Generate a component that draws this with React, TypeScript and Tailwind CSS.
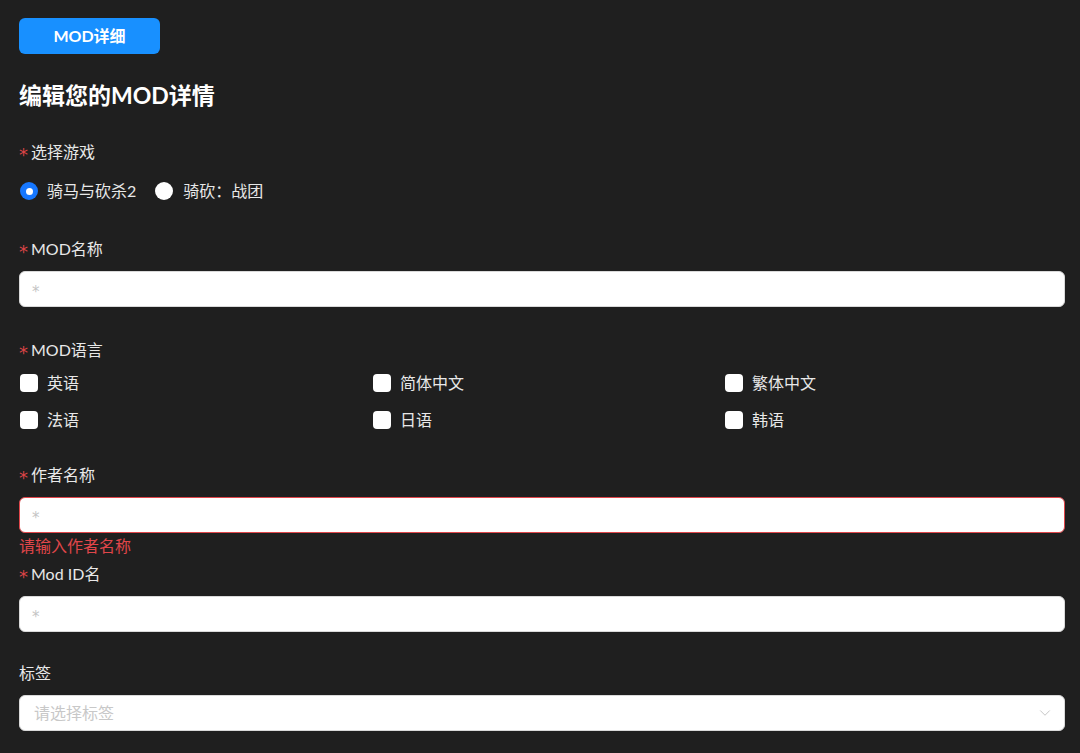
import { ChevronDown } from "lucide-react";

const font = { fontFamily: "Lato, 'Noto Sans CJK SC', sans-serif" };

function Label({ text, required = true }: { text: string; required?: boolean }) {
    return (
        <div className="flex items-center h-6 text-[16px] text-[#e8e8e8]">
            {required && (
                <span className="text-[#dc4446] mr-[3px] text-[18px] leading-none translate-y-[3px]" style={{ fontFamily: "'DejaVu Sans', sans-serif" }}>
                    *
                </span>
            )}
            <span>{text}</span>
        </div>
    );
}

function TextInput({ error = false }: { error?: boolean }) {
    return (
        <div
            className={`h-9 bg-white rounded-md flex items-center px-3 text-[#c4c4c4] text-[15px] border ${
                error ? "border-[#e0464a]" : "border-[#d9d9d9]"
            }`}
        >
            <span className="translate-y-[3px]" style={{ fontFamily: "'DejaVu Sans', sans-serif" }}>*</span>
        </div>
    );
}

function Check({ text }: { text: string }) {
    return (
        <div className="flex items-center h-6">
            <div className="w-[18px] h-[18px] bg-white rounded-[4px] ml-px mr-[9px]" />
            <span className="text-[16px] text-[#e8e8e8]">{text}</span>
        </div>
    );
}

export default function App() {
    const langs = ["英语", "简体中文", "繁体中文", "法语", "日语", "韩语"];

    return (
        <div className="w-[1080px] h-[753px] bg-[#1f1f1f] overflow-hidden px-[19px] pt-[18px]" style={font}>
            <button className="w-[141px] h-9 rounded-md bg-[#1890ff] text-white font-bold text-[16px]">
                MOD详细
            </button>

            <h1 className="mt-[27px] text-[23px] font-bold text-white leading-7">编辑您的MOD详情</h1>

            <div className="mt-[31px]">
                <Label text="选择游戏" />
            </div>
            <div className="mt-[15px] flex items-center h-6 text-[16px] text-[#e8e8e8]">
                <div className="w-[18px] h-[18px] rounded-full bg-[#1677ff] flex items-center justify-center ml-px mr-[9px]">
                    <div className="w-[7px] h-[7px] rounded-full bg-white" />
                </div>
                <span>骑马与砍杀2</span>
                <div className="w-[18px] h-[18px] rounded-full bg-white ml-[19px] mr-[10px]" />
                <span>骑砍：战团</span>
            </div>

            <div className="mt-[34px]">
                <Label text="MOD名称" />
            </div>
            <div className="mt-[10px] w-[1046px]">
                <TextInput />
            </div>

            <div className="mt-[31px]">
                <Label text="MOD语言" />
            </div>
            <div className="mt-[9px] grid grid-cols-[353px_352px_1fr] gap-y-[13px] w-[1046px]">
                {langs.map((l) => (
                    <Check key={l} text={l} />
                ))}
            </div>

            <div className="mt-[31px]">
                <Label text="作者名称" />
            </div>
            <div className="mt-[10px] w-[1046px]">
                <TextInput error />
            </div>
            <div className="h-[26px] flex items-center text-[16px] text-[#e0464a]">请输入作者名称</div>

            <div className="mt-[3px]">
                <Label text="Mod ID名" />
            </div>
            <div className="mt-[10px] w-[1046px]">
                <TextInput />
            </div>

            <div className="mt-[29px]">
                <Label text="标签" required={false} />
            </div>
            <div className="mt-[10px] w-[1046px] h-9 bg-white rounded-md border border-[#d9d9d9] flex items-center justify-between pl-3.5 pr-2.5 text-[16px] text-[#c8c8c8]">
                <span>请选择标签</span>
                <ChevronDown size={18} strokeWidth={1.2} className="text-[#c0c0c0]" />
            </div>
        </div>
    );
}
